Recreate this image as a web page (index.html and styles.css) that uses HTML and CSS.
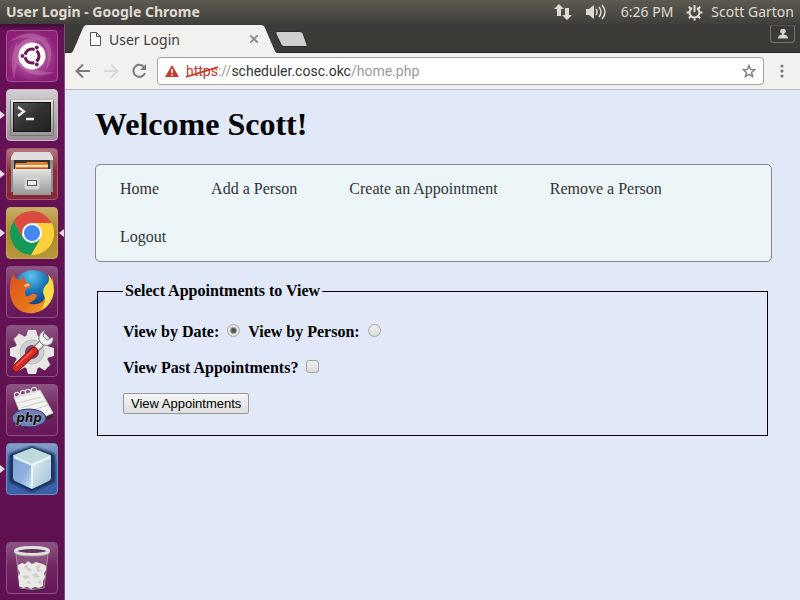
FILE: index.html
```html
<!DOCTYPE html>
<html lang="en">
<head>
<meta charset="utf-8">
<title>User Login</title>
<link rel="stylesheet" href="styles.css">
</head>
<body>
<svg class="defs" width="0" height="0" aria-hidden="true">
  <defs>
    <linearGradient id="silver" x1="0" y1="0" x2="0" y2="1"><stop offset="0" stop-color="#e4e4e4"/><stop offset="1" stop-color="#969696"/></linearGradient>
    <linearGradient id="screen" x1="0" y1="0" x2="1" y2="1"><stop offset="0" stop-color="#5a5b58"/><stop offset=".5" stop-color="#30312f"/><stop offset="1" stop-color="#222"/></linearGradient>
    <linearGradient id="fox" x1="0" y1="0" x2="1" y2="1"><stop offset="0" stop-color="#d9531c"/><stop offset=".6" stop-color="#e8731d"/><stop offset="1" stop-color="#f6b032"/></linearGradient>
    <radialGradient id="globe" cx=".45" cy=".15" r=".8"><stop offset="0" stop-color="#5cc3ec"/><stop offset=".5" stop-color="#1c74b8"/><stop offset="1" stop-color="#12386f"/></radialGradient>
    <linearGradient id="cubeleft" x1="0" y1="0" x2="1" y2="1"><stop offset="0" stop-color="#7fa3d0"/><stop offset=".6" stop-color="#8fb2dd"/><stop offset="1" stop-color="#d4e8fa"/></linearGradient>
    <linearGradient id="cuberight" x1="0" y1="0" x2="1" y2="1"><stop offset="0" stop-color="#e6eef6"/><stop offset="1" stop-color="#9dbfd2"/></linearGradient>
    <filter id="soft"><feGaussianBlur stdDeviation="1"/></filter>
  </defs>
</svg>

<header class="panel">
  <span class="panel-title">User Login - Google Chrome</span>
  <div class="indicators">
    <svg width="18" height="16" viewBox="0 0 18 16" role="img" aria-label="Network"><path fill="#dfdbd2" d="M5 0 10 5H7v7H3V5H0zM11 4h4v7h3l-5 5-5-5h3z"/></svg>
    <svg class="volume" width="20" height="16" viewBox="0 0 20 16" role="img" aria-label="Volume"><path fill="#dfdbd2" d="M0 5h3l5-4v14l-5-4H0z"/><path fill="none" stroke="#dfdbd2" stroke-width="1.500" d="M10 5q2 3 0 6M13 3q4 5 0 10M16 1q6 7 0 14"/></svg>
    <span class="clock">6:26 PM</span>
    <svg class="cog" width="17" height="17" viewBox="0 0 17 17" role="img" aria-label="Session"><path fill="none" stroke="#dfdbd2" stroke-width="2" d="M6 4.200a5 5 0 1 0 5 0M8.500 1v7M2.800 2.800l2 2M14.200 2.800l-2 2M.5 8.500H4M13 8.500h3.500M2.800 14.200l2-2M14.200 14.200l-2-2M8.500 13v3.500"/></svg>
    <span>Scott Garton</span>
  </div>
</header>

<div class="desktop">
<nav class="launcher" aria-label="Launcher">
  <button class="tile dash" aria-label="Dash"><svg viewBox="0 0 52 52"><g fill="#f0c8e5" opacity=".22"><path d="M1 13Q22-3 38 8q14 12 1 34 8-22-5-31Q19 3 1 13z"/><path d="M8 50Q2 24 13 14q12-11 32-5-20-1-28 10-6 10-9 31z"/><path d="M50 42Q28 50 15 38 4 27 11 12q-2 18 10 24 12 7 29 6z"/></g><circle cx="26" cy="26" r="13.500" fill="#fff"/><circle cx="26" cy="26" r="7" fill="none" stroke="#6b1551" stroke-width="3" stroke-dasharray="12.500 2.160" stroke-dashoffset="6.250"/><g fill="#6b1551" stroke="#fff" stroke-width=".7"><circle cx="16.500" cy="26" r="2.300"/><circle cx="30.800" cy="17.500" r="2.300"/><circle cx="30.800" cy="34.500" r="2.300"/></g></svg></button>
  <button class="tile terminal running" aria-label="Terminal"><svg viewBox="0 0 52 52"><rect x="4.500" y="10.500" width="43" height="36" rx="1" fill="url(#silver)" stroke="#777"/><path fill="none" stroke="#f4f4f4" d="M5 11h42"/><rect x="7.500" y="13.500" width="37" height="29" fill="url(#screen)" stroke="#151515"/><path fill="none" stroke="#eee" stroke-width="2.300" d="m12 18 6 4.500-6 4.500M20 30h8"/></svg></button>
  <button class="tile files running" aria-label="Files"><svg viewBox="0 0 52 52"><path fill="#8f8f8f" d="M5 10h42v34H5z"/><path fill="#dedede" d="M8 4h36l3 5v3H5V9z"/><path fill="#333" d="M8 12h36v12H8z"/><path fill="#e28535" d="M10 15h10l1-1h20l1 2v8H9v-7z"/><path fill="#fbe2bd" d="M10 17h32v2H10z"/><path fill="#c74b1e" d="M10 20h32v1H10z"/><path fill="url(#silver)" d="M7 21h13l2 1h8l2-1h13v26H7z"/><path stroke="#eee" d="M7 21.500h38"/><rect x="20" y="31" width="12" height="9" rx="1" fill="#eee" stroke="#d6d6d6" stroke-width="3"/><rect x="21.500" y="32.500" width="9" height="5" fill="#eee" stroke="#555"/></svg></button>
  <button class="tile chrome running focused" aria-label="Google Chrome"><svg viewBox="0 0 52 52"><circle cx="26" cy="26" r="22" fill="#e7ad1f"/><path fill="#fdd03d" d="M26 16h19.600A22 22 0 0 1 25 48l9.700-17z"/><path fill="#159957" d="M7.500 14A22 22 0 0 0 25 48l9.700-17L26 36l-8.700-5z"/><path fill="#db4c40" d="M7.500 14a22 22 0 0 1 38.100 2H26l-9 5-.5 9z"/><circle cx="26" cy="26" r="10" fill="#fff"/><circle cx="26" cy="26" r="8" fill="#4688f1"/></svg></button>
  <button class="tile" aria-label="Firefox"><svg viewBox="0 0 52 52"><circle cx="27" cy="24" r="20" fill="url(#globe)"/><path fill="url(#fox)" d="M7 8q2 5 6 6 3-1 5-4 0 4 2 6l5 3q-1 3-5 4-2 3 0 7 3 1 6-2 4-1 5 2-3 6-9 7 7 3 14-1 6-6 7-15l4-10q1 7 0 12 0 20-19 24-20 2-24-19Q3 16 7 8z"/><path fill="#fbdc4d" d="M42 8q6 7 6 17-1 13-13 19 6-9 3-15l-1-2q0-6 5-10 2-4 0-9z"/><path fill="#f4c591" d="M18 19q4-3 6 0-2 2-5 2z"/></svg></button>
  <button class="tile" aria-label="System Settings"><svg viewBox="0 0 52 52"><g transform="translate(26 27)"><g fill="#e6e6e4"><circle r="17"/><g id="teeth"><path d="m-4-22h8l2 7H-6zM-4 22h8l2-7H-6z"/><path d="m-22-4v8l7 2V-6zM22-4v8l-7 2V-6z"/></g><use href="#teeth" transform="rotate(45)"/></g><circle r="12" fill="#cfcfcf" stroke="#bbb"/><circle r="7" fill="#7b456e"/></g><path d="m23 31 14-14" stroke="#777" stroke-width="7"/><path d="m23 31 14-14" stroke="#eee" stroke-width="5"/><path d="M39 5q-7 3-6 10 3 7 10 5 5-2 4-8l-6 3-4-4z" fill="#efefef" stroke="#777"/><path d="m10 43 18-17" stroke="#8d1111" stroke-width="8" stroke-linecap="round"/><path d="m10 43 18-17" stroke="#d52b27" stroke-width="6" stroke-linecap="round"/><path d="m10 41 16-15" stroke="#e9655c" stroke-width="1.500"/></svg></button>
  <button class="tile" aria-label="PHP editor"><svg viewBox="0 0 52 52"><path fill="#222" opacity=".6" d="m9 15 26-6 13 24-29 12z"/><path fill="#f2f2ee" stroke="#ccc" d="m8 13 26-7 13 23-28 12z"/><path fill="none" stroke="#ccc" d="m12 19 23-6M15 24l23-7M18 29l24-8"/><g fill="none" stroke="#ddd" stroke-width="1.200"><circle cx="11" cy="11" r="2.600"/><circle cx="17" cy="9" r="2.600"/><circle cx="22" cy="8" r="2.600"/><circle cx="28" cy="6" r="2.600"/></g><ellipse cx="23" cy="34" rx="17" ry="9" fill="#7381b7" stroke="#303c70"/><text class="php" x="23" y="38" text-anchor="middle">php</text></svg></button>
  <button class="tile netbeans running" aria-label="NetBeans"><svg viewBox="0 0 52 52"><path fill="#1b3564" stroke="#1b3564" stroke-width="6" stroke-linejoin="round" filter="url(#soft)" d="m26 6 20 7v24L26 46 6 37V13z"/><g stroke-linejoin="round" stroke-width="2"><path fill="#bddadd" stroke="#bddadd" d="m26 6 18 7-18 8-18-8z"/><path fill="url(#cubeleft)" d="m7 13 19 8v25L9 38q-2-1-2-3z"/><path fill="url(#cuberight)" d="m45 13-19 8v25l17-8q2-1 2-3z"/></g><path fill="none" stroke="#eaf6fb" stroke-width="2" d="m8 14 18 8 18-8M26 22v22"/></svg></button>
  <button class="tile trash" aria-label="Trash"><svg viewBox="0 0 52 52"><ellipse cx="26" cy="46" rx="13" ry="2.500" fill="#35152f"/><path fill="#ddd" fill-opacity=".18" stroke="#ad8da7" d="m10 12 4 34q12 3 24 0l4-34z"/><path fill="#e9e9e5" d="m12 23 4-2 3 1 3-3 4 3 4-2 3 1 4 1 3 2 0 4-2 3 1 4-2 4v5l-4 2-4-1-4 2-4-2-4 1-4-2v-5l-1-4 2-4-2-4z"/><path fill="#cfcfca" d="m18 25 3-3 1 4 5 1-4 3zM30 24l5-1-2 4 3 2-5 1zM16 34l5-1 3 3-5 1zM26 33l4-2 4 4-5 1zM20 41l3-3 2 4zM31 40l4-2 1 5z"/><ellipse cx="26" cy="9" rx="16.500" ry="3.500" fill="#6b3561" stroke="#e2e2df" stroke-width="3"/><path d="M8 10q1 4 18 4t18-4" fill="none" stroke="#a9a9a6"/></svg></button>
</nav>

<div class="browser">
  <div class="tabstrip">
    <div class="tab">
      <svg class="tab-shape" viewBox="0 0 206 28" preserveAspectRatio="none" aria-hidden="true"><path fill="#f2f1f0" d="M0 28q2-1 3-4L12 3q1-3 4-3h174q3 0 4 3l9 21q1 3 3 4z"/></svg>
      <svg class="page-icon" width="11" height="14" viewBox="0 0 11 14" aria-hidden="true"><path fill="#fff" stroke="#555" d="M.5.5h6l4 4v9H.5zM6.500.5v4h4"/></svg>
      <span class="tab-label">User Login</span>
      <button class="plain" aria-label="Close tab"><svg width="8" height="8" viewBox="0 0 8 8"><path stroke="#888" stroke-width="1.700" d="m0 0 8 8M8 0 0 8"/></svg></button>
    </div>
    <button class="plain new-tab" aria-label="New tab"><svg width="33" height="16" viewBox="0 0 33 16"><path fill="#d0cfcd" stroke="#2b2a27" d="M2 .5h23q2 0 3 2l4 11q1 2-1 2H9q-2 0-3-2L1 3Q0 .5 2 .5z"/></svg></button>
    <button class="profile" aria-label="Profile"><svg width="10" height="10" viewBox="0 0 10 10"><path fill="#d4d3cf" d="M5 0A2.300 2.300 0 0 1 6 4.500L6 5.500Q10 6 10 9.500H0Q0 6 4 5.500V4.500A2.300 2.300 0 0 1 5 0z"/></svg></button>
  </div>
  <div class="toolbar">
    <button class="plain" aria-label="Back"><svg width="16" height="16" viewBox="0 0 16 16"><path fill="none" stroke="#7b7b7b" stroke-width="2" d="M15 8H2M8 1.500 1.500 8 8 14.500"/></svg></button>
    <button class="plain" aria-label="Forward"><svg width="16" height="16" viewBox="0 0 16 16"><path fill="none" stroke="#d9d8d7" stroke-width="2" d="M1 8h13M8 1.500 14.500 8 8 14.500"/></svg></button>
    <button class="plain" aria-label="Reload"><svg width="16" height="16" viewBox="0 0 16 16"><path fill="none" stroke="#7b7b7b" stroke-width="2" d="M13 4A6 6 0 1 0 14 10"/><path fill="#7b7b7b" d="M15 1v6H9z"/></svg></button>
    <div class="omnibox">
      <svg width="14" height="12" viewBox="0 0 14 12" role="img" aria-label="Not secure"><path fill="#c73b2b" d="m7 0 7 12H0z"/><path stroke="#fff" stroke-width="1.600" d="M7 4v4M7 9.200v1.500"/></svg>
      <div class="url" role="textbox" contenteditable="true" spellcheck="false" aria-label="Address"><span class="scheme">https<svg class="strike" viewBox="0 0 34 12" preserveAspectRatio="none"><path stroke="#c73b2b" stroke-width="1.700" d="M0 11 34 1"/></svg></span><span class="dim">://</span>scheduler.cosc.okc<span class="dim">/home.php</span></div>
      <button class="plain" aria-label="Bookmark"><svg width="14" height="14" viewBox="0 0 14 14"><path fill="none" stroke="#7b7b7b" stroke-width="1.400" d="m7 1.500 1.600 3.900 4.200.3-3.200 2.700 1 4.100L7 10.300l-3.600 2.200 1-4.100L1.200 5.700l4.200-.3z"/></svg></button>
    </div>
    <button class="plain menu" aria-label="Menu"><svg width="4" height="14" viewBox="0 0 4 14"><g fill="#7b7b7b"><circle cx="2" cy="2" r="1.600"/><circle cx="2" cy="7" r="1.600"/><circle cx="2" cy="12" r="1.600"/></g></svg></button>
  </div>

  <main class="page">
    <h1>Welcome Scott!</h1>
    <ul class="site-nav">
      <li><a href="#">Home</a></li>
      <li><a href="#">Add a Person</a></li>
      <li><a href="#">Create an Appointment</a></li>
      <li><a href="#">Remove a Person</a></li>
      <li><a href="#">Logout</a></li>
    </ul>
    <form>
      <fieldset>
        <legend>Select Appointments to View</legend>
        <div class="row">
          <label for="by-date">View by Date:</label>
          <input type="radio" name="view" id="by-date" checked>
          <label for="by-person">View by Person:</label>
          <input type="radio" name="view" id="by-person">
        </div>
        <div class="row">
          <label for="past">View Past Appointments?</label>
          <input type="checkbox" id="past">
        </div>
        <button class="submit" type="button">View Appointments</button>
      </fieldset>
    </form>
  </main>
</div>
</div>
</body>
</html>
```
FILE: styles.css
```css
* { box-sizing: border-box; }
body {
  margin: 0;
  min-height: 100vh;
  display: flex;
  flex-direction: column;
  font-family: "Noto Sans", "Open Sans", sans-serif;
  background: #e1e8f7;
}
svg { display: block; flex: none; }
.defs { position: absolute; }

.panel {
  height: 24px;
  padding: 0 6px;
  display: flex;
  align-items: center;
  justify-content: space-between;
  background: linear-gradient(#5d5a51, #403f3a);
  color: #dfdbd2;
  font-size: 14px;
  line-height: 24px;
  white-space: nowrap;
}
.panel-title { font-weight: bold; }
.indicators { display: flex; align-items: center; }
.volume { margin-left: 14px; }
.clock { margin-left: 15px; }
.cog { margin: 0 8px 0 13px; }

.desktop { flex: 1; display: flex; }
.launcher {
  flex: none;
  width: 65px;
  padding: 6px 0 6px 6px;
  display: flex;
  flex-direction: column;
  gap: 7px;
  background: linear-gradient(#3f0d36, transparent 6px), linear-gradient(#671156, #5e1150);
  border-right: 1px solid #8a4c80;
}
.tile {
  position: relative;
  width: 52px;
  height: 52px;
  padding: 0;
  border: 1px solid #8b5180;
  border-radius: 4px;
  background: linear-gradient(#8d5483, #70285f 45%, #67165a);
}
.tile svg { width: 52px; height: 52px; margin: -1px; }
.dash { background: radial-gradient(circle, #c878b2, #8d1f79 75%); border-color: #a75296; }
.terminal { background: linear-gradient(#d3ccd1, #9c8f99); border-color: #c8bcc5; }
.files { background: linear-gradient(#b37680, #8c2c38 45%, #852936); border-color: #a45a68; }
.chrome { background: linear-gradient(#c8ae67, #a98724 50%, #b8983d); border-color: #c2a65e; }
.netbeans { background: linear-gradient(#86a0c7, #3f68ac 45%, #3a5fa6); border-color: #6f8fc1; }
.trash { margin-top: auto; }
.running::before, .focused::after {
  content: "";
  position: absolute;
  top: 21px;
  border: solid transparent;
  border-width: 4px 5px;
}
.running::before { left: -7px; border-left-color: #e4dce2; border-right-width: 0; }
.focused::after { right: -7px; border-right-color: #e4dce2; border-left-width: 0; }
.php { font: italic bold 12px "DejaVu Sans", sans-serif; fill: #111; stroke: #aab3d6; stroke-width: 1px; paint-order: stroke; }

.browser { flex: 1; min-width: 0; display: flex; flex-direction: column; }
.plain { padding: 0; border: 0; background: none; }
.tabstrip {
  height: 29px;
  padding: 1px 5px 0 6px;
  display: flex;
  background: #3c3b37;
  border-bottom: 1px solid #2b2a27;
}
.tab {
  position: relative;
  width: 206px;
  height: 28px;
  padding: 0 19px 0 19px;
  display: flex;
  align-items: center;
  gap: 8px;
  color: #3c3c3c;
  font-size: 14px;
}
.tab > * { position: relative; }
.tab > .tab-shape { position: absolute; left: 0; top: 0; width: 100%; height: 100%; }
.tab-label { flex: 1; }
.new-tab { align-self: center; margin-left: -2px; }
.profile {
  width: 25px;
  height: 18px;
  margin-left: auto;
  padding: 0;
  display: grid;
  place-items: center;
  border: 1px solid #77756f;
  border-top-color: #55534e;
  border-radius: 0 0 4px 4px;
  background: #3c3b37;
}
.toolbar {
  height: 37px;
  padding: 0 16px 0 10px;
  display: flex;
  align-items: center;
  gap: 12px;
  background: #f2f1f0;
  border-bottom: 1px solid #b5b8c2;
}
.omnibox {
  flex: 1;
  height: 28px;
  margin-left: -2px;
  padding: 0 7px;
  display: flex;
  align-items: center;
  gap: 7px;
  background: #fff;
  border: 1px solid #a5a4a2;
  border-radius: 3px;
}
.url { flex: 1; color: #333; font-family: Roboto, sans-serif; font-size: 14px; line-height: 20px; white-space: nowrap; }
.scheme { position: relative; color: #c73b2b; }
.strike { position: absolute; left: 0; top: 3px; width: 100%; height: 12px; }
.dim { color: #999; }
.menu { margin-left: 4px; }

.page {
  flex: 1;
  padding: 15px 28px 0 30px;
  background: #e1e8f7;
  color: #000;
  font-family: "Liberation Serif", serif;
  font-size: 16px;
}
h1 { margin: 0 0 21px; font-size: 32px; line-height: 38px; }
.site-nav {
  margin: 0 0 20px;
  padding: 0 24px;
  display: flex;
  flex-wrap: wrap;
  column-gap: 52px;
  list-style: none;
  background: #ecf5f8;
  border: 1px solid #888;
  border-radius: 5px;
  line-height: 48px;
}
.site-nav a { color: #333; text-decoration: none; }
fieldset {
  margin: 0 4px 0 2px;
  padding: 14px 25px 21px;
  border: 1px solid #000;
  font-weight: bold;
}
legend { padding: 0 2px; line-height: 18px; }
.row { height: 36px; display: flex; align-items: center; gap: 8px; }
input {
  appearance: none;
  width: 13px;
  height: 13px;
  margin: 0 0 3px;
  border: 1px solid #a5a5a5;
  border-radius: 3px;
  background: linear-gradient(#eee, #dcdcdc);
}
input[type="radio"] { border-radius: 50%; }
input[type="radio"]:checked { background: radial-gradient(circle, #555 2px, #e6e6e6 4px); }
.submit {
  margin-top: 7px;
  height: 21px;
  padding: 0 7px;
  border: 1px solid #999;
  border-radius: 2px;
  background: linear-gradient(#f6f6f6, #dedede);
  color: #000;
  font: 13px "Liberation Sans", sans-serif;
  display: block;
}
```
